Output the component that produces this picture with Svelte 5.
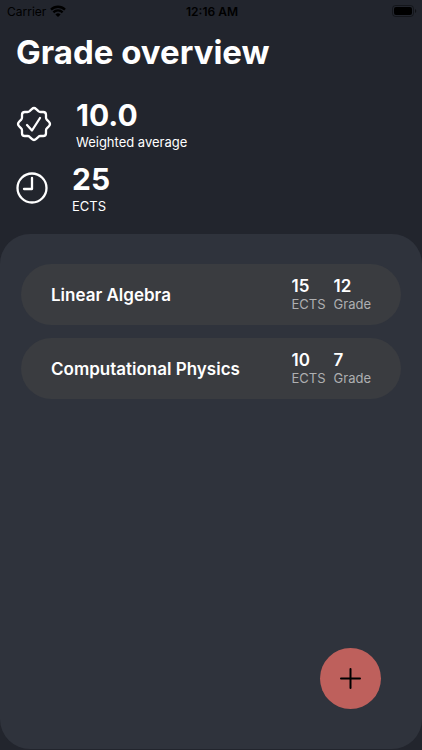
<script>
  let courses = $state([
    { id: 1, name: 'Linear Algebra', ects: 15, grade: 12 },
    { id: 2, name: 'Computational Physics', ects: 10, grade: 7 }
  ]);

  let totalEcts = $derived(courses.reduce((sum, course) => sum + course.ects, 0));

  // average weighted by the ECTS of each course
  let average = $derived(
    courses.reduce((sum, course) => sum + course.grade * course.ects, 0) / totalEcts
  );

  function addCourse() {
    courses.push({ id: Date.now(), name: 'New course', ects: 5, grade: 10 });
  }
</script>

<div class="screen">
  <div class="status-bar">
    <div class="carrier">
      <span>Carrier</span>
      <svg width="16" height="12" viewBox="0 0 16 12" aria-hidden="true">
        <g fill="none" stroke="#000" stroke-width="2.3">
          <path d="M1 4.6a10 10 0 0 1 14 0" />
          <path d="M3.4 7.4a6.4 6.4 0 0 1 9.2 0" />
        </g>
        <path d="M8 12 5.4 9.5a3.6 3.6 0 0 1 5.2 0z" />
      </svg>
    </div>
    <span class="time">12:16 AM</span>
    <div class="battery">
      <svg width="25" height="12" viewBox="0 0 25 12" aria-hidden="true">
        <rect x="0.5" y="0.5" width="21" height="11" rx="3" fill="none" stroke="#000" stroke-opacity="0.4" />
        <rect x="2" y="2" width="18" height="8" rx="2" />
        <path d="M23 4v4a2.2 2.2 0 0 0 0-4z" fill-opacity="0.5" />
      </svg>
    </div>
  </div>

  <header>
    <h1>Grade overview</h1>

    <div class="summary">
      <svg width="36" height="36" viewBox="0 0 36 36" aria-hidden="true">
        <path d="M15.8 3.1Q18 1 20.2 3.1L22.4 5.2Q23.2 6 24.5 6H27.2Q30 6 30 8.8V11.5Q30 12.8 30.8 13.6L32.9 15.8Q35 18 32.9 20.2L30.8 22.4Q30 23.2 30 24.5V27.2Q30 30 27.2 30H24.5Q23.2 30 22.4 30.8L20.2 32.9Q18 35 15.8 32.9L13.6 30.8Q12.8 30 11.5 30H8.8Q6 30 6 27.2V24.5Q6 23.2 5.2 22.4L3.1 20.2Q1 18 3.1 15.8L5.2 13.6Q6 12.8 6 11.5V8.8Q6 6 8.8 6H11.5Q12.8 6 13.6 5.2Z" />
        <path d="m11 19 5 5.5 8-12.5" />
      </svg>
      <div>
        <div class="value">{average.toFixed(1)}</div>
        <div class="label">Weighted average</div>
      </div>
    </div>

    <div class="summary">
      <svg width="32" height="32" viewBox="0 0 32 32" aria-hidden="true">
        <circle cx="16" cy="16" r="14.5" />
        <path d="M16 6v11H8" />
      </svg>
      <div>
        <div class="value">{totalEcts}</div>
        <div class="label">ECTS</div>
      </div>
    </div>
  </header>

  <main>
    <ul>
      {#each courses as course (course.id)}
        <li>
          <h2>{course.name}</h2>
          <div class="stat">
            <strong>{course.ects}</strong>
            <span>ECTS</span>
          </div>
          <div class="stat">
            <strong>{course.grade}</strong>
            <span>Grade</span>
          </div>
        </li>
      {/each}
    </ul>

    <button class="add-btn" aria-label="Add course" onclick={addCourse}>
      <svg width="23" height="23" viewBox="0 0 23 23" aria-hidden="true">
        <path d="M11.5 2v19M2 11.5h19" />
      </svg>
    </button>
  </main>
</div>

<style>
  :global(body) {
    margin: 0;
    background: #22252d;
  }

  .screen {
    display: flex;
    flex-direction: column;
    box-sizing: border-box;
    min-height: 100vh;
    padding-bottom: 1px;
    background: #22252d;
    color: #fff;
    font-family: Inter, 'Liberation Sans', sans-serif;
  }

  .status-bar {
    display: grid;
    grid-template-columns: 1fr auto 1fr;
    align-items: center;
    height: 22px;
    padding: 0 5px 0 7px;
    color: #000;
    font-size: 12px;
  }

  .carrier {
    display: flex;
    align-items: center;
    gap: 4px;
  }

  .time {
    font-weight: 600;
  }

  .battery {
    display: flex;
    justify-content: flex-end;
  }

  header {
    padding: 8px 16px 18px;
  }

  h1 {
    margin: 0 0 22px;
    font-size: 33px;
    line-height: 44px;
    font-weight: 700;
  }

  .summary {
    display: flex;
    align-items: center;
    gap: 24px;
    height: 56px;
    margin-bottom: 8px;
  }

  .summary:last-child {
    margin-bottom: 0;
  }

  .summary svg {
    fill: none;
    stroke: #fff;
    stroke-width: 2.3;
    stroke-linecap: round;
    stroke-linejoin: round;
  }

  .value {
    font-size: 30px;
    line-height: 37px;
    font-weight: 700;
  }

  .label {
    font-size: 13px;
    line-height: 17px;
  }

  main {
    position: relative;
    flex: 1;
    padding: 30px 21px;
    border-radius: 30px;
    background: #2f333c;
  }

  ul {
    display: flex;
    flex-direction: column;
    gap: 13px;
    margin: 0;
    padding: 0;
    list-style: none;
  }

  li {
    display: flex;
    align-items: center;
    gap: 8px;
    box-sizing: border-box;
    min-height: 61px;
    padding: 0 30px;
    border-radius: 31px;
    background: #3a3c40;
  }

  h2 {
    flex: 1;
    margin: 0;
    font-size: 17px;
    line-height: 22px;
    font-weight: 600;
  }

  .stat {
    display: flex;
    flex-direction: column;
  }

  .stat strong {
    font-size: 17px;
    line-height: 18px;
    font-weight: 600;
  }

  .stat span {
    color: #aeafb1;
    font-size: 13px;
    line-height: 18px;
  }

  .add-btn {
    position: absolute;
    right: 41px;
    bottom: 40px;
    display: flex;
    align-items: center;
    justify-content: center;
    width: 61px;
    height: 61px;
    padding: 0;
    border: none;
    border-radius: 50%;
    background: #be605c;
    cursor: pointer;
  }

  .add-btn path {
    fill: none;
    stroke: #000;
    stroke-width: 2;
    stroke-linecap: round;
  }
</style>
